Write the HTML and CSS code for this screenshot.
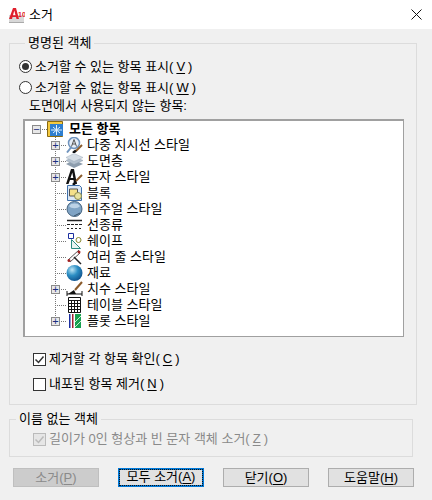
FILE: index.html
```html
<!DOCTYPE html>
<html>
<head>
  <meta charset="utf-8">
  <title>소거</title>
  <link rel="stylesheet" href="styles.css">
</head>
<body>
  <div class="titlebar">
    <svg class="app-icon" width="17" height="16" viewBox="0 0 17 16">
      <path d="M1 8h15v8H1z" fill="#d8d8d8"/>
      <path d="M1 15.500h15" stroke="#aaa"/>
      <path d="M1 12 5 1h3l3 11H8.500L8 10H4.500L4 12zM5 8.200h2.500L6.300 3.500z" fill="#e0202c"/>
      <text x="10" y="10" class="app-icon-num">10</text>
    </svg>
    <span class="title">소거</span>
    <svg class="close" width="11" height="11" viewBox="0 0 11 11">
      <path d="M.5.5l10 10M10.500.5l-10 10" stroke="#111" fill="none"/>
    </svg>
  </div>

  <div class="content">
    <fieldset class="group group-named">
      <legend>명명된 객체</legend>
      <label class="option"><span class="radio checked"></span>소거할 수 있는 항목 표시(<u>V</u>)</label>
      <label class="option"><span class="radio"></span>소거할 수 없는 항목 표시(<u>W</u>)</label>
      <div class="tree-caption">도면에서 사용되지 않는 항목:</div>

      <div class="tree">
        <div class="row root">
          <span class="gutter gutter-root"><span class="box">−</span></span>
          <svg class="icon" width="17" height="16" viewBox="0 0 17 16">
            <path d="M.5 .5h15v15H.5z" fill="#f4c93f" stroke="#8a6a10"/>
            <path d="M3 3h13v12H3z" fill="#2f7fd0"/>
            <path d="M9.500 4v10M4 9h11M6 6l7 6M13 6l-7 6" stroke="#dff1ff"/>
          </svg>
          <b>모든 항목</b>
        </div>
        <div class="row">
          <span class="gutter"><span class="box">+</span></span>
          <svg class="icon" width="17" height="16" viewBox="0 0 17 16">
            <circle cx="8" cy="6" r="5.500" fill="#e6eef8" stroke="#6f93bd" stroke-width="1.500"/>
            <path d="M5.500 9.500l2.500-7 2.500 7M6.300 7h3.400" stroke="#555" fill="none"/>
            <path d="M1 15.500l4-5" stroke="#6f93bd" stroke-width="2"/>
            <path d="M10 14l6-6" stroke="#8a5a2a" stroke-width="2"/>
            <path d="M7 16l3-2.500" stroke="#111" stroke-width="2.500"/>
          </svg>
          <span>다중 지시선 스타일</span>
        </div>
        <div class="row">
          <span class="gutter"><span class="box">+</span></span>
          <svg class="icon" width="17" height="16" viewBox="0 0 17 16">
            <path d="M0 11l8-4 9 4-9 4z" fill="#8d9dad"/>
            <path d="M0 7.500l8-4 9 4-9 4z" fill="#b3c0cd" stroke="#8d9dad" stroke-width=".5"/>
            <path d="M0 4.500l8-4 9 4-9 4z" fill="#d5dde5" stroke="#9dabb9" stroke-width=".5"/>
          </svg>
          <span>도면층</span>
        </div>
        <div class="row">
          <span class="gutter"><span class="box">+</span></span>
          <svg class="icon" width="17" height="16" viewBox="0 0 17 16">
            <path d="M0 15L5 0h3l3 15H8l-.5-4H4l-1.500 4zM4.500 9h2.800L6.300 3.500z" fill="#111"/>
            <path d="M10 12l6-6" stroke="#8a5a2a" stroke-width="2"/>
            <path d="M7 16l3-3" stroke="#111" stroke-width="2.500"/>
          </svg>
          <span>문자 스타일</span>
        </div>
        <div class="row">
          <span class="gutter"></span>
          <svg class="icon" width="17" height="16" viewBox="0 0 17 16">
            <path d="M1.500 .5h12l2 2v13h-14z" fill="#dbe8f6" stroke="#3f6fa8"/>
            <path d="M3.500 4h8v7h-8z" fill="#f5e08a" stroke="#555"/>
            <circle cx="12" cy="11" r="3.500" fill="#e9e3a0" stroke="#8a8a50"/>
          </svg>
          <span>블록</span>
        </div>
        <div class="row">
          <span class="gutter"></span>
          <svg class="icon" width="17" height="16" viewBox="0 0 17 16">
            <circle cx="8.500" cy="8" r="7.500" fill="#7fa3c4" stroke="#45637f"/>
            <path d="M3 5a6 4 0 0 1 11 0c-2 3-9 3-11 0z" fill="#bcd2e6"/>
            <path d="M8 15l6-3" stroke="#39536b"/>
          </svg>
          <span>비주얼 스타일</span>
        </div>
        <div class="row">
          <span class="gutter"></span>
          <svg class="icon" width="17" height="16" viewBox="0 0 17 16">
            <path d="M1 3.500h15" stroke="#222" stroke-width="1.500"/>
            <path d="M1 7.500h15" stroke="#222" stroke-dasharray="3 1"/>
            <path d="M1 11.500h15" stroke="#222" stroke-dasharray="2 2"/>
          </svg>
          <span>선종류</span>
        </div>
        <div class="row">
          <span class="gutter"></span>
          <svg class="icon" width="17" height="16" viewBox="0 0 17 16">
            <path d="M2.500 .5h5v5h-5z" fill="#fff" stroke="#1c2fa0"/>
            <path d="M5.500 6.500v9h9z" fill="#e8f4f0" stroke="#2a8a80"/>
            <circle cx="12.500" cy="7" r="2.500" fill="#fff" stroke="#8a8a30"/>
          </svg>
          <span>쉐이프</span>
        </div>
        <div class="row">
          <span class="gutter"></span>
          <svg class="icon" width="17" height="16" viewBox="0 0 17 16">
            <path d="M2 11L13 1M4 13L14 4" stroke="#555" fill="none"/>
            <circle cx="3" cy="11.500" r="1.500" fill="#a02020"/>
            <circle cx="13" cy="3" r="1.500" fill="#a02020"/>
            <path d="M8 8l7 7" stroke="#222" stroke-width="1.500"/>
          </svg>
          <span>여러 줄 스타일</span>
        </div>
        <div class="row">
          <span class="gutter"></span>
          <svg class="icon" width="17" height="16" viewBox="0 0 17 16">
            <defs>
              <radialGradient id="ball" cx=".35" cy=".3" r=".8">
                <stop offset="0" stop-color="#bfe6f5"/>
                <stop offset=".45" stop-color="#2d8fc4"/>
                <stop offset="1" stop-color="#0b4a86"/>
              </radialGradient>
            </defs>
            <circle cx="8.500" cy="8" r="8" fill="url(#ball)"/>
          </svg>
          <span>재료</span>
        </div>
        <div class="row">
          <span class="gutter"><span class="box">+</span></span>
          <svg class="icon" width="17" height="16" viewBox="0 0 17 16">
            <path d="M1 10v5M16 10v5M1 13h15" stroke="#111" fill="none"/>
            <path d="M2 13l6-4 2 4z" fill="#111"/>
            <path d="M9 9l7-8" stroke="#8a5a2a" stroke-width="2"/>
          </svg>
          <span>치수 스타일</span>
        </div>
        <div class="row">
          <span class="gutter"></span>
          <svg class="icon" width="17" height="16" viewBox="0 0 17 16">
            <path d="M2.500 .5h12v15h-12z" fill="#fff" stroke="#111"/>
            <path d="M2 3.500h13M2 6.500h13M2 9.500h13M2 12.500h13M5.500 4v11M8.500 4v11M11.500 4v11" stroke="#111"/>
          </svg>
          <span>테이블 스타일</span>
        </div>
        <div class="row last">
          <span class="gutter"><span class="box">+</span></span>
          <svg class="icon" width="17" height="16" viewBox="0 0 17 16">
            <path d="M3 1h1.500v14H3z" fill="#1c2fa0"/>
            <path d="M6 1h1.500v14H6z" fill="#a02030"/>
            <path d="M9 1h6v14H9z" fill="#18a050"/>
            <path d="M9 9l6-6M9 14l6-6" stroke="#c8f0d0"/>
          </svg>
          <span>플롯 스타일</span>
        </div>
      </div>

      <label class="check first"><span class="checkbox checked">
        <svg width="11" height="11" viewBox="0 0 11 11"><path d="M1.500 5.500l3 3 5-6" stroke="#333" stroke-width="1.500" fill="none"/></svg>
      </span>제거할 각 항목 확인(<u>C</u>)</label>
      <label class="check second"><span class="checkbox"></span>내포된 항목 제거(<u>N</u>)</label>
    </fieldset>

    <fieldset class="group group-unnamed">
      <legend>이름 없는 객체</legend>
      <label class="check disabled"><span class="checkbox checked">
        <svg width="11" height="11" viewBox="0 0 11 11"><path d="M1.500 5.500l3 3 5-6" stroke="#bbb" stroke-width="1.500" fill="none"/></svg>
      </span>길이가 0인 형상과 빈 문자 객체 소거(<u>Z</u>)</label>
    </fieldset>

    <div class="buttons">
      <button type="button" disabled>소거(<u>P</u>)</button>
      <button type="button" class="default"><span class="focus">모두 소거(<u>A</u>)</span></button>
      <button type="button">닫기(<u>O</u>)</button>
      <button type="button">도움말(<u>H</u>)</button>
    </div>
  </div>
</body>
</html>
```

FILE: styles.css
```css
html, body {
  margin: 0;
  height: 500px;
  overflow: hidden;
}
body {
  background: #f0f0f0;
  color: #000;
  font-family: "Liberation Sans", "Noto Sans CJK KR", sans-serif;
  font-size: 13px;
  line-height: 16px;
}
u {
  text-underline-offset: 2px;
}

.titlebar {
  height: 29px;
  background: #fff;
  display: flex;
  align-items: center;
  padding: 0 10px 0 8px;
}
.app-icon-num {
  font-family: "Liberation Sans", sans-serif;
  font-size: 7px;
  font-weight: bold;
  fill: #e0202c;
}
.title {
  margin-left: 4px;
  flex: 1;
}

.content {
  padding: 6px 15px 0 9px;
}
.group {
  margin: 0;
  padding: 0;
  border: 1px solid #dcdcdc;
  min-width: 0;
}
.group legend {
  margin-left: 6px;
  padding: 0 3px;
  height: 16px;
}
.group-named {
  height: 370px;
  padding-left: 9px;
  box-sizing: border-box;
}
.group-unnamed {
  margin-top: 6px;
  margin-right: 4px;
  height: 46px;
  box-sizing: border-box;
}

.option {
  display: flex;
  align-items: center;
  height: 21px;
  gap: 3px;
}
.group-named legend + .option {
  margin-top: 5px;
}
.radio {
  width: 11px;
  height: 11px;
  border: 1px solid #333;
  border-radius: 50%;
  background: #fff;
  display: flex;
  align-items: center;
  justify-content: center;
}
.radio.checked::after {
  content: "";
  width: 7px;
  height: 7px;
  border-radius: 50%;
  background: #333;
}
.tree-caption {
  margin-left: 10px;
  height: 21px;
}

.tree {
  width: 378px;
  height: 215px;
  margin-left: 4px;
  background: #fff;
  border: 1px solid #a0a0a0;
  border-left-width: 2px;
  border-top-width: 2px;
}
.row {
  display: flex;
  align-items: center;
  height: 16px;
  padding-left: 17px;
}
.row .icon {
  flex: none;
  margin-right: 4px;
}
.row.root {
  padding-left: 0;
}
.row.root .icon {
  margin-right: 5px;
}
/* dotted tree lines */
.gutter {
  width: 24px;
  height: 16px;
  flex: none;
  display: flex;
  align-items: center;
  background-image:
    repeating-linear-gradient(to bottom, #777 0 1px, transparent 1px 2px),
    repeating-linear-gradient(to right, #777 0 1px, transparent 1px 2px);
  background-size: 1px 16px, 11px 1px;
  background-position: 13px 0, 13px 8px;
  background-repeat: no-repeat;
}
.gutter-root {
  width: 22px;
  background-image: repeating-linear-gradient(to right, #777 0 1px, transparent 1px 2px);
  background-size: 7px 1px;
  background-position: 15px 8px;
}
.row.last .gutter {
  background-size: 1px 9px, 11px 1px;
}
.box {
  width: 7px;
  height: 7px;
  border: 1px solid #8a8a8a;
  background: #e8e8e8;
  color: #1c2f80;
  font-family: "Liberation Sans", sans-serif;
  font-size: 11px;
  line-height: 7px;
  text-align: center;
  margin-left: 9px;
}
.gutter-root .box {
  margin-left: 7px;
}

.check {
  display: flex;
  align-items: center;
  gap: 3px;
  height: 16px;
  margin-left: 14px;
}
.check.first {
  margin-top: 14px;
}
.check.second {
  margin-top: 9px;
}
.checkbox {
  width: 11px;
  height: 11px;
  border: 1px solid #333;
  background: #fff;
  display: flex;
}
.check.disabled {
  margin-left: 23px;
  margin-top: 4px;
  color: #8a8a8a;
}
.check.disabled .checkbox {
  border-color: #bbb;
  background: #e6e6e6;
}

.buttons {
  display: flex;
  gap: 19px;
  margin: 11px 0 0 4px;
}
.buttons button {
  width: 86px;
  height: 19px;
  box-sizing: border-box;
  padding: 0;
  margin: 0;
  background: #e1e1e1;
  border: 1px solid #adadad;
  color: #000;
  font: inherit;
  line-height: 15px;
}
.buttons button:disabled {
  background: #ccc;
  border-color: #bfbfbf;
  color: #8a8a8a;
}
.buttons .default {
  border: 2px solid #0078d7;
}
.focus {
  display: block;
  height: 15px;
  outline: 1px dotted #111;
  line-height: 14px;
}
```
